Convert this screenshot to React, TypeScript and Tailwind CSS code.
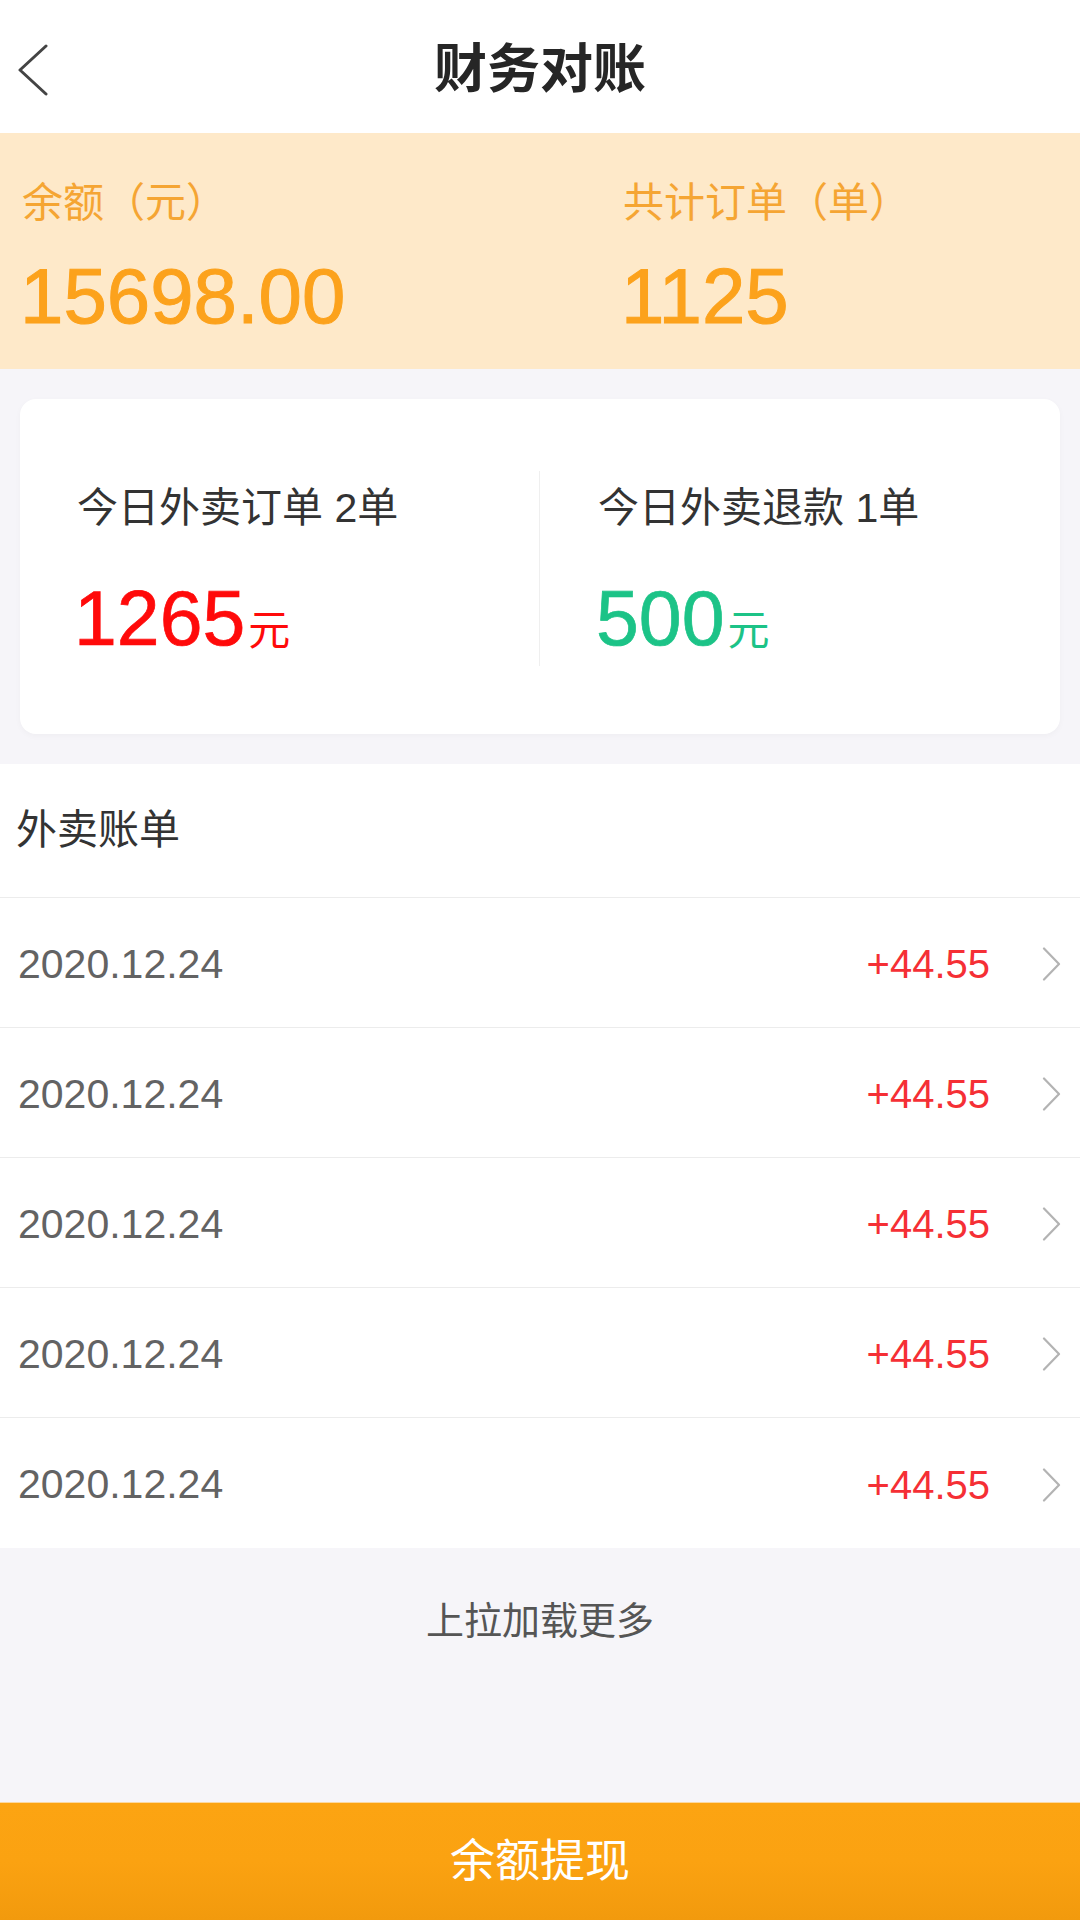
import React from "react";

const FONT = "font-['Liberation_Sans','Noto_Sans_CJK_SC',sans-serif]";

function BackIcon() {
  return (
    <svg width="32" height="52" viewBox="0 0 32 52" fill="none">
      <path d="M28 2 L2 26 L28 50" stroke="#444444" strokeWidth="3" strokeLinecap="round" strokeLinejoin="round" />
    </svg>
  );
}

function Chevron() {
  return (
    <svg width="20" height="34" viewBox="0 0 20 34" fill="none">
      <path d="M2 1.5 L17 17 L2 32.5" stroke="#b3b3b3" strokeWidth="2.2" strokeLinecap="round" strokeLinejoin="round" />
    </svg>
  );
}

const rows = Array.from({ length: 5 }, () => ({ date: "2020.12.24", amount: "+44.55" }));

export default function App() {
  return (
    <div className={`${FONT} flex h-[1920px] w-[1080px] flex-col bg-[#f6f5f9]`}>
      {/* Header */}
      <div className="grid h-[133px] grid-cols-[1fr_auto_1fr] items-center bg-white pt-[6px]">
        <div className="pl-[18px]">
          <BackIcon />
        </div>
        <div className="text-[53px] font-semibold leading-none text-[#262626]">财务对账</div>
        <div />
      </div>

      {/* Balance band */}
      <div className="grid grid-cols-[601px_1fr] bg-[#fee9c9] pb-[34px] pl-[22px] pt-[50px]">
        <div className="flex flex-col">
          <div className="text-[41px] leading-[41px] text-[#f5a533]">余额（元）</div>
          <div className="ml-[-2px] mt-[33px] text-[78px] leading-none text-[#fca21c] [-webkit-text-stroke:1px_#fca21c]">
            15698.00
          </div>
        </div>
        <div className="flex flex-col">
          <div className="text-[41px] leading-[41px] text-[#f5a533]">共计订单（单）</div>
          <div className="ml-[-2px] mt-[33px] text-[78px] leading-none text-[#fca21c] [-webkit-text-stroke:1px_#fca21c]">
            1125
          </div>
        </div>
      </div>

      {/* Today card */}
      <div className="mx-[20px] my-[30px] flex rounded-[16px] bg-white pb-[68px] pt-[72px] shadow-[0_2px_6px_rgba(0,0,0,0.03)]">
        <div className="flex flex-1 flex-col border-r border-[#efefef] pb-[12px] pl-[57px] pt-[17px]">
          <div className="text-[41px] leading-[41px] text-[#333333]">今日外卖订单 2单</div>
          <div className="mt-[51px] flex h-[74px] items-baseline text-[#ff0a0a]">
            <span className="ml-[-3px] text-[77px] leading-none [-webkit-text-stroke:0.7px_#ff0a0a]">1265</span>
            <span className="ml-[3px] text-[42px] leading-none">元</span>
          </div>
        </div>
        <div className="flex flex-1 flex-col pb-[12px] pl-[58px] pt-[17px]">
          <div className="text-[41px] leading-[41px] text-[#333333]">今日外卖退款 1单</div>
          <div className="mt-[51px] flex h-[74px] items-baseline text-[#1cc387]">
            <span className="ml-[-2px] text-[77px] leading-none [-webkit-text-stroke:0.7px_#1cc387]">500</span>
            <span className="ml-[3px] text-[42px] leading-none">元</span>
          </div>
        </div>
      </div>

      {/* List */}
      <div className="bg-white">
        <div className="flex h-[134px] items-center border-b border-[#ececec] pl-[16px] text-[41px] leading-none text-[#333333]">
          外卖账单
        </div>
        {rows.map((r, i) => (
          <div
            key={i}
            className={`flex h-[130px] items-center justify-between pl-[18px] pr-[18px] ${
              i < rows.length - 1 ? "border-b border-[#ececec]" : ""
            }`}
          >
            <span className="pt-[3px] text-[41px] leading-none text-[#636363]">{r.date}</span>
            <div className="flex items-center gap-[52px] pt-[3px]">
              <span className="text-[40px] leading-none text-[#f52f35]">{r.amount}</span>
              <Chevron />
            </div>
          </div>
        ))}
      </div>

      {/* Load more */}
      <div className="flex flex-1 justify-center pt-[54px]">
        <span className="text-[38px] leading-[38px] text-[#555555]">上拉加载更多</span>
      </div>

      {/* Bottom button */}
      <div className="flex h-[118px] items-center justify-center border-t border-[#fcd9a0] bg-gradient-to-b from-[#fca412] via-[#fba211] to-[#f29a0d]">
        <span className="text-[45px] leading-none text-white">余额提现</span>
      </div>
    </div>
  );
}
